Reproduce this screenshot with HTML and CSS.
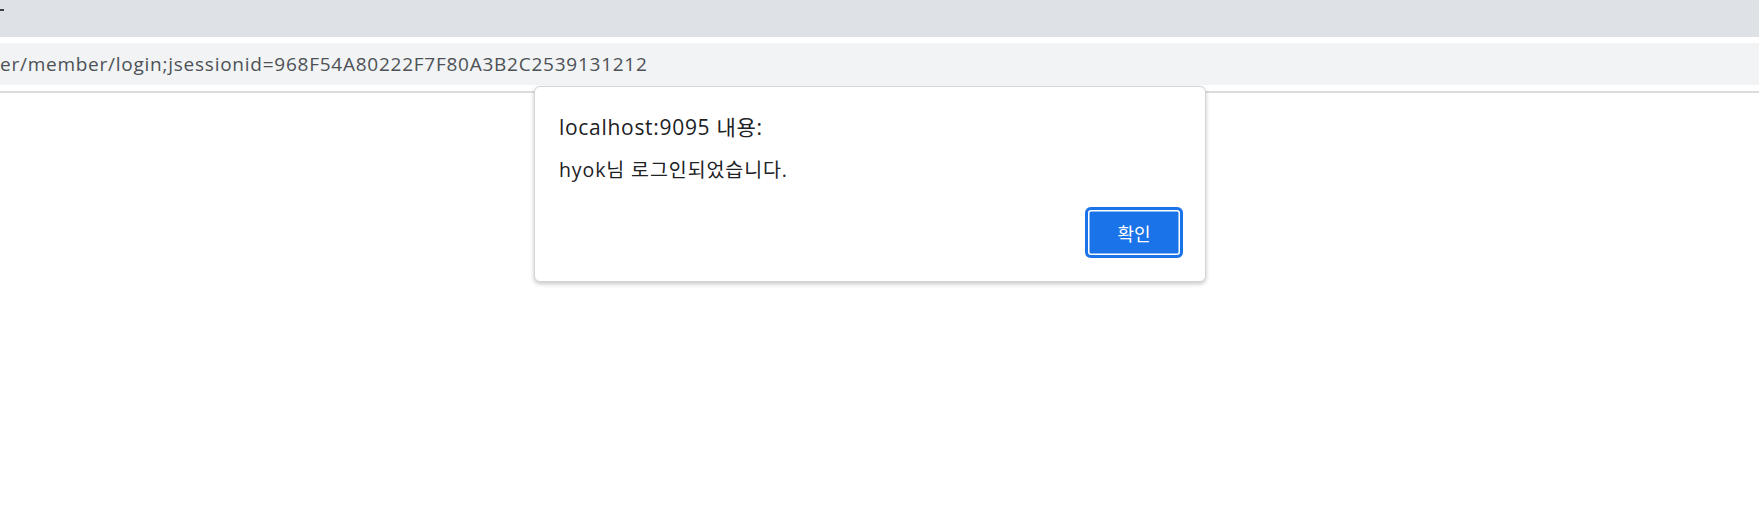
FILE: index.html
```html
<!DOCTYPE html>
<html lang="ko">
<head>
<meta charset="utf-8">
<title>login</title>
<link rel="stylesheet" href="styles.css">
</head>
<body>
<div class="tabstrip"><span class="tab-mark"></span></div>
<div class="address-wrap">
  <div class="address">er/member/login;jsessionid=968F54A80222F7F80A3B2C2539131212</div>
</div>
<div class="toolbar-line"></div>
<main class="page"></main>
<div class="dialog" role="alertdialog">
  <div class="dialog-title">localhost:9095 내용:</div>
  <div class="dialog-msg">hyok님 로그인되었습니다.</div>
  <div class="dialog-actions">
    <button class="btn-ok">확인</button>
  </div>
</div>
</body>
</html>
```

FILE: styles.css
```css
html, body {
  margin: 0;
  padding: 0;
  background: #ffffff;
  font-family: "Open Sans", "Noto Sans CJK KR", sans-serif;
}
.tabstrip {
  height: 37px;
  background: #dee1e6;
  position: relative;
}
.tab-mark {
  position: absolute;
  left: 0;
  top: 9px;
  width: 4px;
  height: 2px;
  background: #3c4043;
}
.address-wrap {
  padding-top: 6px;
  background: #ffffff;
}
.address {
  height: 42px;
  background: #f1f3f4;
  color: #4d5156;
  font-size: 19px;
  letter-spacing: 0.75px;
  line-height: 42px;
  white-space: nowrap;
  overflow: hidden;
}
.toolbar-line {
  margin-top: 6px;
  height: 2px;
  background: #dadce0;
}
.page {
  height: 400px;
}
.dialog {
  position: absolute;
  left: 534px;
  top: 86px;
  width: 672px;
  height: 196px;
  box-sizing: border-box;
  background: #ffffff;
  border: 1px solid #d4d4d4;
  border-radius: 6px;
  box-shadow: 0 2px 4px rgba(0, 0, 0, 0.22);
  padding: 27px 22px 23px 24px;
  display: flex;
  flex-direction: column;
}
.dialog-title {
  font-size: 21px;
  color: #202124;
  line-height: 26px;
  letter-spacing: 0.7px;
}
.dialog-msg {
  font-size: 19.5px;
  color: #202124;
  line-height: 24px;
  margin-top: 18px;
  letter-spacing: 0.9px;
}
.dialog-actions {
  margin-top: auto;
  display: flex;
  justify-content: flex-end;
}
.btn-ok {
  width: 98px;
  height: 51px;
  box-sizing: border-box;
  background: #1a73e8;
  color: #ffffff;
  border: none;
  box-shadow: inset 0 0 0 3px #1a73e8, inset 0 0 0 4.5px #ffffff;
  border-radius: 6px;
  font-family: "Noto Sans CJK KR", sans-serif;
  font-size: 18px;
  padding: 0;
}
```
